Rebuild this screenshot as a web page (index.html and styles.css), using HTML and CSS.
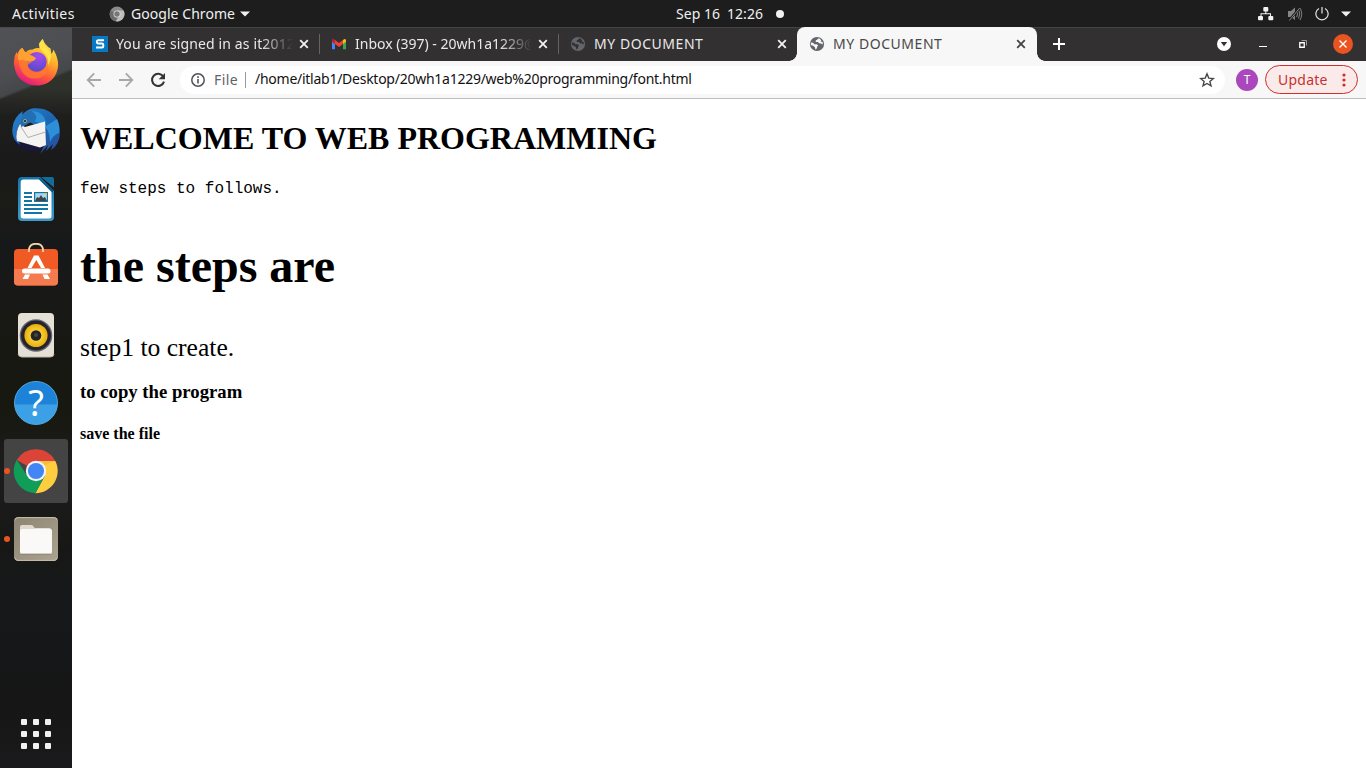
FILE: index.html
```html
<!DOCTYPE html>
<html lang="en">
<head>
<meta charset="utf-8">
<title>MY DOCUMENT</title>
<link rel="stylesheet" href="styles.css">
</head>
<body>
<svg class="defs" width="0" height="0">
  <defs>
    <symbol id="globe" viewBox="0 0 16 16"><circle cx="8" cy="8" r="7.1" fill="currentColor"/><path d="M1.8 6.6 4.2 6.8 5.2 8.2H7.8L9.2 9.4 8.2 10.6 8 12.2 6.4 13.6 5.9 11.3 3.8 9.6 1.9 9.2ZM6.2 2.2 9 2.2 8.4 3.6 6.7 4.5V6H9L10 7.3 12 7.4 13.9 8.6 13.6 6 11.6 5.6 12.3 4.2 10.5 2.6 8.8 2.2Z" class="globe-land"/></symbol>
    <symbol id="close" viewBox="0 0 10 10"><path d="M1.2 1.2 8.8 8.8M8.8 1.2 1.2 8.8" stroke="currentColor" stroke-width="1.8"/></symbol>
    <linearGradient id="ff" x1=".8" y1="0" x2=".3" y2="1"><stop offset="0" stop-color="#fff44f"/><stop offset=".35" stop-color="#ffb32b"/><stop offset=".68" stop-color="#ff5b36"/><stop offset="1" stop-color="#e31587"/></linearGradient>
    <radialGradient id="ffp" cx=".6" cy=".2" r=".9"><stop offset="0" stop-color="#a74af0"/><stop offset="1" stop-color="#4c4bc4"/></radialGradient>
    <linearGradient id="tb" x1="0" y1="0" x2="1" y2="1"><stop offset="0" stop-color="#2a83cf"/><stop offset=".5" stop-color="#1c66b2"/><stop offset="1" stop-color="#2a4b9b"/></linearGradient>
    <linearGradient id="wr" x1="0" y1="0" x2="0" y2="1"><stop offset="0" stop-color="#1375ac"/><stop offset="1" stop-color="#3d9bcb"/></linearGradient>
    <linearGradient id="files" x1="0" y1="0" x2="1" y2="1"><stop offset="0" stop-color="#8d8471"/><stop offset="1" stop-color="#aaa38f"/></linearGradient>
    <radialGradient id="spk"><stop offset="0" stop-color="#ffe36a"/><stop offset=".65" stop-color="#f1c42b"/><stop offset="1" stop-color="#e9af05"/></radialGradient>
  </defs>
</svg>

<header class="topbar">
  <span class="activities">Activities</span>
  <span class="app-menu">
    <svg width="16" height="16" viewBox="0 0 16 16"><circle cx="8" cy="8" r="7.4" fill="#8b8b8b"/><path d="M8 8 1.6 4.4A7.4 7.4 0 0 0 7 15.3Z" fill="#6c6c6c"/><path d="M8 4.5H14.6A7.4 7.4 0 0 1 7 15.3L11 9Z" fill="#bdbdbd"/><circle cx="8" cy="8" r="3.5" fill="#ddd"/><circle cx="8" cy="8" r="2.7" fill="#777"/></svg>
    <span class="app-name">Google Chrome</span>
    <svg width="10" height="6" viewBox="0 0 10 6"><path d="M0 .5H10L5 5.5Z" fill="#f2f2f2"/></svg>
  </span>
  <span class="clock"><span class="date">Sep 16</span><span class="time">12:26</span><i class="dot"></i></span>
  <span class="status">
    <svg width="16" height="14" viewBox="0 0 16 14" fill="#f2f2f2"><rect x="5.3" y="0" width="5" height="4.5" rx="1"/><rect x="0" y="9" width="5" height="4.3" rx="1"/><rect x="10.3" y="9" width="5" height="4.3" rx="1"/><path d="M7.3 4H8.3V6.2H13V9H12V7.2H3.5V9H2.5V6.2H7.3Z"/></svg>
    <svg width="16" height="16" viewBox="0 0 16 16" fill="#858585"><path d="M1 5H4L8 1.5V14L4 11H1Z"/><path d="M9.5 5Q11.5 8 9.5 11M11.2 3.5Q14 8 11.2 12.5M13 2Q16.4 8 13 14" fill="none" stroke="#777" stroke-width="1.1"/><path d="M2 14.5 12.5 2" stroke="#1d1d1d" stroke-width="2.4"/><path d="M2.3 14.5 12.7 2" stroke="#858585"/></svg>
    <svg width="14" height="14" viewBox="0 0 14 14" fill="none" stroke="#e6e6e6" stroke-width="1.2"><path d="M4 1.5A6.1 6.1 0 1 0 10 1.5M7 0V6.5"/></svg>
    <svg width="10" height="6" viewBox="0 0 10 6"><path d="M0 .5H10L5 5.5Z" fill="#f2f2f2"/></svg>
  </span>
</header>

<div class="desktop">
  <nav class="dock">
    <div class="launcher"><svg viewBox="0 0 48 48">
      <path d="M10.3 8.8Q12 12.2 13.6 13.2Q17 10 20 10.7Q24 8.2 27.5 9.3Q27 4 30.8 0Q32.5 5.8 38.5 9.6L39.6 15Q41 12.8 41.4 10.5Q49.2 24 44.2 34.4C35.5 52.5 8.6 49.2 3.3 31.5Q-.1 20 4.7 12.8L5.3 15.2Q7.2 10.3 10.3 8.8Z" fill="url(#ff)"/>
      <path d="M27 4.5Q27 9.2 31.4 13.2Q38 19 35.6 27Q42.1 17 36 10.5Q31.5 6.4 30.8 0Q28.6 2.2 27 4.5Z" fill="#ffe34a"/>
      <circle cx="24.8" cy="22.8" r="9.9" fill="url(#ffp)"/>
      <path d="M6.5 20Q13 15.1 17.8 20.3Q21 23 18.3 24.2Q15 24.9 16 28.7Q19 34 26 33.2Q34 32.2 35.6 24Q37 37 26.5 39.1C14 42 7 32 6.5 20Z" fill="#ff7a31" opacity=".8"/>
      <path d="M10.3 8.8Q11.9 13 15.5 14.7Q21 16.5 24.2 19.3Q22.5 22.4 18 22.6Q11.3 20.8 6 20.8Q5.2 13.2 10.3 8.8Z" fill="#ffa032"/>
    </svg></div>
    <div class="launcher"><svg viewBox="0 0 48 48">
      <path d="M1 18Q-2 35 10 43L8 39Q16 46 24 46L22 43 30 45 34 38 12 20Z" fill="#1a1637"/>
      <path d="M20 1.5C38-1 48 11 48 25Q48 37 39 43L41 37 34 44 36 38 28 47Q34 38 33 26L14 12Q6 16 4.5 27L8 38Q-1 32 .5 21Q1.5 10 11 4L10 8Q14 3 20 1.5Z" fill="url(#tb)"/>
      <path d="M20 4Q34 5 34 19L45 12Q48 18 47 26Q41 28 38 35Q38 22 30 17L16 12Z" fill="#2d8fd8"/>
      <path d="M8 17 13 20 33 14.5 34 38 28 40.5 5 34Q3 25 8 17Z" fill="#f4f3f1"/><path d="M9 20 16 30.5 33.5 25" fill="none" stroke="#b0aead" stroke-width="1"/>
      <path d="M9 20Q7 6 19 3.5Q28 9 22 15Q17 15 14 18Z" fill="#236fb4"/><circle cx="13" cy="14" r="1.7" fill="#e1c65a"/><circle cx="13" cy="14" r="1.1" fill="#08213b"/>
    </svg></div>
    <div class="launcher"><svg viewBox="0 0 48 48">
      <path d="M10 2H28L42 16V42Q42 46 38 46H10Q6 46 6 42V6Q6 2 10 2Z" fill="url(#wr)"/><path d="M11.5 4.5H27L39.5 17V41Q39.5 43.5 37 43.5H11.5Q8.7 43.5 8.7 41V7Q8.7 4.5 11.5 4.5Z" fill="#fff"/><path d="M29 2H40Q42 2 42 4V12.5Z" fill="#126c9c"/><path d="M27 3V4L41 18V15Z" fill="#0b5480"/>
      <path d="M12 18H20M12 22H20M12 26H20M12 30H36M12 34H36M12 38H30" stroke="#1375a4" stroke-width="2"/><rect x="22" y="17" width="14" height="10" fill="#1375a4"/><rect x="23.2" y="18.2" width="11.6" height="7.6" fill="#a9d9f2"/><path d="M23 26 25 22 27 23 29 20 31 23 33 22 35 26Z" fill="#444"/><path d="M32 18H35V21Z" fill="#f9bf2b"/>
    </svg></div>
    <div class="launcher"><svg viewBox="0 0 48 48">
      <rect x="2" y="6" width="44" height="36.5" rx="4" fill="#f05b25"/><path d="M2 26H46V38.5Q46 42.5 42 42.5H6Q2 42.5 2 38.5Z" fill="#f47b4f"/><path d="M17 9V6Q18 .8 24 .8T31 6V9" fill="none" stroke="#efd9ab" stroke-width="1.8"/>
      <path d="M22 12.5H26.5L33 25H29L24.3 17 19.5 25H15.5ZM13 31.5H18L16 36H10.5ZM30.5 31.5H35.5L38 36H32.5Z" fill="#fff"/><rect x="10" y="25.5" width="28.5" height="5" rx="2.5" fill="#fff"/>
    </svg></div>
    <div class="launcher"><svg viewBox="0 0 48 48">
      <rect x="6" y="2" width="36" height="44" rx="4" fill="#e4e0d6"/><path d="M6 43Q7 46 10 46H38Q42 46 42 43" fill="none" stroke="#bdb8ad"/><circle cx="24" cy="24.5" r="16.3" fill="#666670"/><circle cx="24" cy="24.5" r="15" fill="#24232e"/><circle cx="24" cy="24.5" r="11.6" fill="url(#spk)"/><circle cx="24" cy="24.5" r="5.3" fill="#242424"/><circle cx="24" cy="24" r="2" fill="#454545"/>
    </svg></div>
    <div class="launcher help"><span>?</span></div>
    <div class="launcher active running"><svg viewBox="0 0 48 48">
      <path d="M24 24 4.8 13A22.2 22.2 0 0 1 43.4 14Z" fill="#dc4437"/><path d="M24 24V14H43.3A22.2 22.2 0 0 1 23.3 46.2L32.8 29Z" fill="#ffcd40"/><path d="M24 24 15.3 29 4.8 12.8A22.2 22.2 0 0 0 23.5 46.2L32.7 29Z" fill="#0f9d58"/><path d="M24 14H43.4L33 18Z" fill="#e8b23b" opacity=".5"/><circle cx="24" cy="24" r="10.2" fill="#f4f4f4"/><circle cx="24" cy="24" r="8.1" fill="#4285f4"/>
    </svg></div>
    <div class="launcher running"><svg viewBox="0 0 48 48">
      <rect x="2" y="2" width="44" height="44" rx="4.5" fill="url(#files)"/><path d="M2.7 5.5Q3 2.6 6 2.6H42Q45 2.6 45.3 5.5" fill="none" stroke="#c5bea9"/><path d="M2.7 42.5Q3 45.4 6 45.4H42Q45 45.4 45.3 42.5" fill="none" stroke="#c5bea9"/><path d="M8 18V12Q8 10 10 10H19Q21 10 22 12L23 14H32V20Z" fill="#dfdacc"/><rect x="8" y="14" width="32" height="25" rx="2.5" fill="#faf9f7"/><path d="M8 18V16H20L23 13.2H37Q40 13.2 40 17V20Z" fill="#faf9f7"/><path d="M9.5 39H38.5" stroke="#746d5d" opacity=".6"/>
    </svg></div>
    <div class="app-grid"><i></i><i></i><i></i><i></i><i></i><i></i><i></i><i></i><i></i></div>
  </nav>

  <main class="window">
    <div class="tabstrip">
      <div class="tab first">
        <svg width="16" height="16" viewBox="0 0 16 16"><rect width="16" height="16" fill="#0879c4"/><path d="M12 4.3H6Q4.8 4.3 4.8 5.8T6 7.6H10Q11.4 7.7 11.4 9.5T10 11.6H4" fill="none" stroke="#fff" stroke-width="2"/></svg>
        <span class="title faded t-signed">You are signed in as it2012</span><svg class="x" width="10" height="10"><use href="#close"/></svg>
      </div>
      <div class="tab">
        <svg width="16" height="16" viewBox="0 0 16 16"><path d="M1 3.3V13.2H4V7.5Z" fill="#4285f4"/><path d="M12 7.5V13.2H15V4Z" fill="#34a853"/><path d="M12 4V8L15 5.8V4Q14.2 2 12 4Z" fill="#fbbc04"/><path d="M4 4V8L8 11 12 8V4L8 7Z" fill="#ea4335"/><path d="M1 5.8 4 8V4Q2 2 1 4Z" fill="#c5221f"/></svg>
        <span class="title faded t-inbox">Inbox (397) - 20wh1a1229@</span><svg class="x" width="10" height="10"><use href="#close"/></svg>
      </div>
      <div class="tab last-dark">
        <svg class="globe" width="16" height="16"><use href="#globe"/></svg>
        <span class="title t-doc">MY DOCUMENT</span><svg class="x" width="10" height="10"><use href="#close"/></svg>
      </div>
      <div class="tab current">
        <svg class="globe" width="16" height="16"><use href="#globe"/></svg>
        <span class="title t-doc">MY DOCUMENT</span><svg class="x" width="10" height="10"><use href="#close"/></svg>
      </div>
      <svg class="new-tab" width="12" height="12" viewBox="0 0 12 12"><path d="M6 0V12M0 6H12" stroke="#fff" stroke-width="2"/></svg>
      <div class="controls">
        <svg width="14" height="14" viewBox="0 0 14 14"><circle cx="7" cy="7" r="7" fill="#fff"/><path d="M3.8 5H10.2L7 9.3Z" fill="#333032"/></svg>
        <svg width="8" height="8" viewBox="0 0 8 8"><path d="M0 6.5H8" stroke="#fff"/></svg>
        <svg width="8" height="8" viewBox="0 0 8 8" fill="none"><path d="M.75 2.75H5.25V7.25H.75Z" stroke="#fff" stroke-width="1.3"/><path d="M2.5.5H7.5V5.5" stroke="#999"/></svg>
        <svg width="20" height="20" viewBox="0 0 20 20"><circle cx="10" cy="10" r="10" fill="#e95420"/><path d="M6.5 6.5 13.5 13.5M13.5 6.5 6.5 13.5" stroke="#fff" stroke-width="1.4"/></svg>
      </div>
    </div>

    <div class="toolbar">
      <div class="nav-buttons">
        <svg width="16" height="16" viewBox="0 0 16 16" fill="none" stroke="#a7a7a7" stroke-width="1.8"><path d="M15 8H2M8.2 1.3 1.7 8 8.2 14.7"/></svg>
        <svg width="16" height="16" viewBox="0 0 16 16" fill="none" stroke="#a7a7a7" stroke-width="1.8"><path d="M1 8H14M7.8 1.3 14.3 8 7.8 14.7"/></svg>
        <svg width="16" height="16" viewBox="0 0 16 16"><path d="M13.2 4.4A6.1 6.1 0 1 0 14 9.6" fill="none" stroke="#333" stroke-width="2"/><path d="M15 1V7.3H8.7Z" fill="#333"/></svg>
      </div>
      <div class="address">
        <svg width="14" height="14" viewBox="0 0 14 14"><circle cx="7" cy="7" r="6.2" fill="none" stroke="#505357" stroke-width="1.5"/><path d="M7 6V10.5M7 3.3V4.9" stroke="#505357" stroke-width="1.6"/></svg>
        <span class="scheme">File</span><span class="url">/home/itlab1/Desktop/20wh1a1229/web%20programming/font.html</span>
        <svg class="star" width="16" height="16" viewBox="0 0 16 16"><path d="M8 1.9 9.8 6.1 14.3 6.5 10.9 9.4 12 13.9 8 11.5 4 13.9 5.1 9.4 1.7 6.5 6.2 6.1Z" fill="none" stroke="#45484b" stroke-width="1.4"/></svg>
      </div>
      <div class="avatar">T</div>
      <div class="update"><span>Update</span><svg width="4" height="14" viewBox="0 0 4 14" fill="#d12d2a"><circle cx="2" cy="2" r="1.6"/><circle cx="2" cy="7" r="1.6"/><circle cx="2" cy="12" r="1.6"/></svg></div>
    </div>

    <article class="page">
      <h1>WELCOME TO WEB PROGRAMMING</h1>
      <p class="intro">few steps to follows.</p>
      <h2>the steps are</h2>
      <p class="step">step1 to create.</p>
      <h3>to copy the program</h3>
      <h4>save the file</h4>
    </article>
  </main>
</div>
</body>
</html>
```
FILE: styles.css
```css
* { box-sizing: border-box; }
body { margin: 0; width: 1366px; height: 768px; overflow: hidden; display: flex; flex-direction: column; font: 14px/20px "Noto Sans", sans-serif; white-space: nowrap; }
svg { display: block; flex: none; }
.defs { position: absolute; }

.topbar { height: 27px; flex: none; background: #1d1d1d; color: #f0f0f0; display: grid; grid-template-columns: 109px 567px 1fr auto; align-items: center; padding-right: 15px; }
.activities { padding-left: 12px; letter-spacing: .45px; }
.app-menu { display: flex; align-items: center; }
.app-name { width: 104px; margin: 0 5px 0 6px; letter-spacing: .05px; }
.clock { display: flex; align-items: center; }
.date { width: 51px; letter-spacing: .05px; }
.time { width: 37px; letter-spacing: .05px; }
.dot { width: 8px; height: 8px; border-radius: 50%; background: #f2f2f2; margin-left: 12px; }
.status { display: flex; align-items: center; gap: 12px; }
.status svg:first-child { margin-right: 1px; }

.desktop { flex: 1; min-height: 0; display: flex; }
.dock { width: 72px; flex: none; padding: 3px 4px 4px; display: flex; flex-direction: column; gap: 4px; border-top: 1px solid #4a4a4b;
  background:
    linear-gradient(158deg, #505255 0, #4c4e51 45px, #45484a 64px, transparent 67px),
    linear-gradient(#2f322c 0, #2f312b 60px, #1e1e1d 88px, #191919 140px, #1b1b17 170px, #17181a 220px, #181814 300px, #17180f 380px, #1c1c1c 440px, #171816 520px, #16181a 570px, #161616 680px, #1a1a1c 100%); }
.launcher { height: 64px; width: 64px; flex: none; display: flex; align-items: center; justify-content: center; position: relative; border-radius: 3px; }
.launcher svg { width: 48px; height: 48px; }
.active { background: #444444; }
.running::before { content: ""; position: absolute; left: 0; top: 29px; width: 6px; height: 6px; border-radius: 50%; background: #e95420; }
.help span { width: 44px; height: 44px; border-radius: 50%; background: linear-gradient(#1c83d9 0 53%, #3ba0e5 54%); border: 1px solid #54a9e1; color: #fff; font: 36px/42px "Noto Sans", sans-serif; text-align: center; }
.app-grid { display: grid; grid-template-columns: repeat(3, 6px); gap: 6px; margin: auto auto 15px; }
.app-grid i { width: 6px; height: 6px; border-radius: 1px; background: #f0f0f0; }

.window { flex: 1; min-width: 0; background: #fff; display: flex; flex-direction: column; }
.tabstrip { height: 34px; flex: none; background: #333032; display: flex; box-shadow: inset 0 1px #444; }
.tab { width: 239px; flex: none; padding: 0 10px 0 11px; display: flex; align-items: center; color: #e9e9e9; position: relative; }
.tab.first { width: 248px; padding-left: 20px; }
.tab:nth-child(-n+2)::after { content: ""; position: absolute; right: 0; top: 7px; width: 1px; height: 20px; background: #656366; }
.title { width: 176px; margin-left: 8px; overflow: hidden; }
.faded { mask-image: linear-gradient(90deg, #000 145px, transparent 177px); }
.t-signed { letter-spacing: .13px; }
.t-inbox { letter-spacing: 0; }
.t-doc { letter-spacing: .55px; }
.x { margin-left: 7px; color: #f2f2f2; }
.globe { color: #626569; }
.globe-land { fill: var(--land, #333032); }
.tab.last-dark { width: 238px; }
.tab.current { width: 240px; background: #f7f7f7; border-radius: 8px 8px 0 0; color: #484848; padding-left: 12px; --land: #f7f7f7; }
.current .x { color: #444; }
.current::before, .current::after { content: ""; position: absolute; bottom: 0; width: 8px; height: 8px; }
.current::before { left: -8px; background: radial-gradient(circle at 0 0, #333032 7.5px, #f7f7f7 8px); }
.current::after { right: -8px; background: radial-gradient(circle at 100% 0, #333032 7.5px, #f7f7f7 8px); }
.new-tab { margin: 11px 0 0 16px; }
.controls { margin-left: auto; padding-right: 13px; display: flex; align-items: center; }
.controls svg:nth-child(2) { margin-left: 28px; }
.controls svg:nth-child(3) { margin-left: 32px; }
.controls svg:nth-child(4) { margin-left: 26px; }

.toolbar { height: 38px; flex: none; background: #f7f7f7; border-bottom: 1px solid #bdbdbd; display: flex; align-items: center; padding: 0 8px 0 14px; }
.nav-buttons { display: flex; gap: 16px; width: 94px; flex: none; }
.address { width: 1045px; height: 28px; flex: none; border-radius: 14px; background: #fff; display: flex; align-items: center; padding: 0 10px 0 11px; }
.scheme { margin-left: 9px; width: 32px; height: 16px; line-height: 15px; color: #5f6368; border-right: 1px solid #999; letter-spacing: .45px; }
.url { margin: 0 0 2px 9px; color: #111; letter-spacing: -.26px; }
.star { margin-left: auto; }
.avatar { width: 22px; height: 22px; flex: none; margin-left: 11px; border-radius: 50%; background: #ab47bc; color: #fff; text-align: center; font: 12px/22px "Noto Sans", sans-serif; }
.update { width: 93px; height: 29px; flex: none; margin-left: 7px; border: 1px solid #d12d2a; border-radius: 15px; background: #faebea; color: #c9312e; display: flex; align-items: center; justify-content: space-between; padding: 0 11px 0 12px; letter-spacing: .25px; }

.page { flex: 1; padding: 21px 8px 0; color: #000; font-family: "Liberation Serif", serif; }
.page h1 { margin: 0 0 23px; font-size: 32px; line-height: 37px; }
.intro { margin: 0 0 40px; font: 16px/18px "Liberation Mono", monospace; }
.page h2 { margin: 0 0 40px; font-size: 48px; line-height: 55px; }
.step { margin: 0 0 18px; font-size: 25.6px; line-height: 30px; }
.page h3 { margin: 0 0 23px; font-size: 18.72px; line-height: 21px; }
.page h4 { margin: 0; font-size: 16px; line-height: 18px; }
```
